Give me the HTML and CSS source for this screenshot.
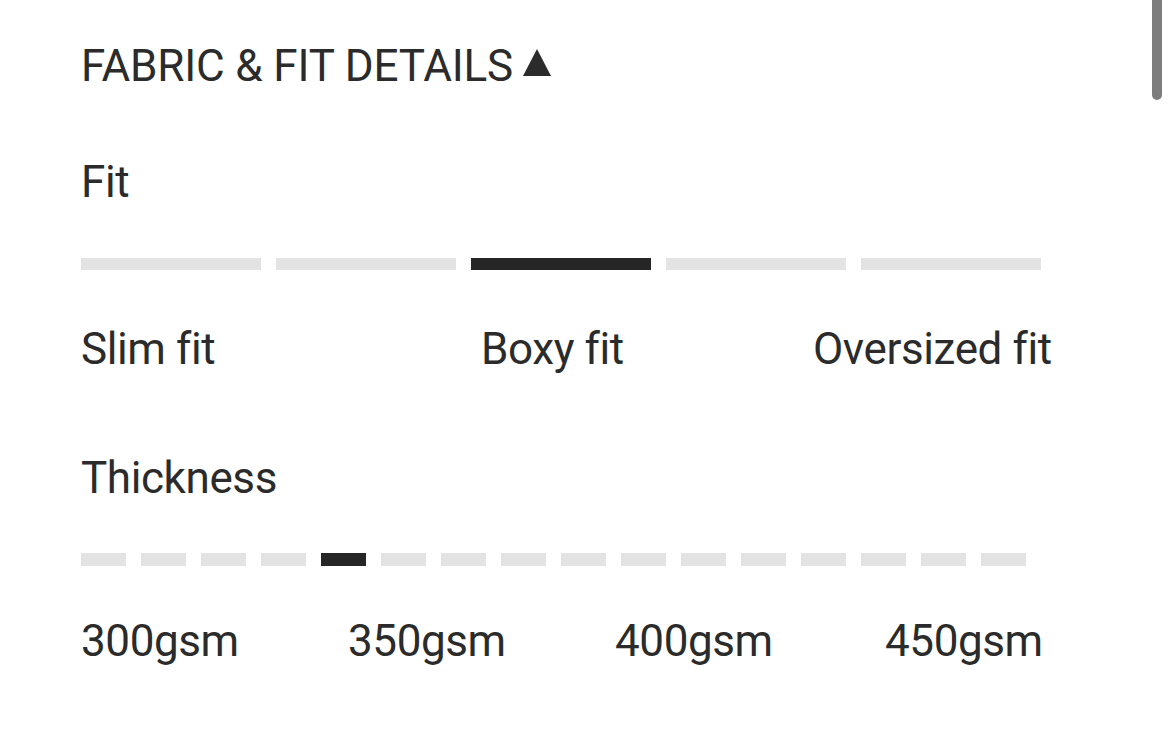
FILE: index.html
```html
<!DOCTYPE html>
<html lang="en">
<head>
    <meta charset="UTF-8">
    <meta name="viewport" content="width=device-width, initial-scale=1.0">
    <title>Fabric &amp; Fit Details</title>
    <link rel="stylesheet" href="styles.css">
</head>
<body>
    <div class="scroll-thumb"></div>

    <section class="details">
        <h2 class="details-title">
            <span>FABRIC &amp; FIT DETAILS</span>
            <svg class="caret" viewBox="0 0 28 27" width="28" height="27">
                <polygon points="14,0 28,27 0,27" />
            </svg>
        </h2>

        <h3 class="scale-title">Fit</h3>
        <div class="scale fit-scale">
            <span class="step"></span>
            <span class="step"></span>
            <span class="step active"></span>
            <span class="step"></span>
            <span class="step"></span>
        </div>
        <div class="scale-labels fit-labels">
            <span>Slim fit</span>
            <span>Boxy fit</span>
            <span>Oversized fit</span>
        </div>

        <h3 class="scale-title thickness-title">Thickness</h3>
        <div class="scale thickness-scale">
            <span class="step"></span>
            <span class="step"></span>
            <span class="step"></span>
            <span class="step"></span>
            <span class="step active"></span>
            <span class="step"></span>
            <span class="step"></span>
            <span class="step"></span>
            <span class="step"></span>
            <span class="step"></span>
            <span class="step"></span>
            <span class="step"></span>
            <span class="step"></span>
            <span class="step"></span>
            <span class="step"></span>
            <span class="step"></span>
        </div>
        <div class="scale-labels thickness-labels">
            <span>300gsm</span>
            <span>350gsm</span>
            <span>400gsm</span>
            <span>450gsm</span>
        </div>
    </section>
</body>
</html>
```

FILE: styles.css
```css
/* General Styles */
body {
    margin: 0;
    padding: 0;
    background: #ffffff;
    color: #2b2b2b;
    font-family: Roboto, "Liberation Sans", sans-serif;
}

.details {
    padding: 40px 0 0 81px;
}

h2, h3 {
    margin: 0;
    font-weight: 400;
}

.details-title,
.scale-title,
.scale-labels {
    font-size: 44px;
    line-height: 52px;
    letter-spacing: -0.4px;
}

.details-title {
    display: flex;
    align-items: center;
    gap: 10px;
    letter-spacing: -0.15px;
}

.caret {
    fill: #2b2b2b;
    margin-top: -8px;
}

.scale-title {
    margin-top: 64px;
}

.thickness-title {
    margin-top: 77px;
}

/* Step bars */
.scale {
    display: grid;
    gap: 15px;
    margin-top: 50px;
}

.fit-scale {
    grid-template-columns: repeat(5, 180px);
}

.thickness-scale {
    grid-template-columns: repeat(16, 45px);
    margin-top: 49px;
}

.step {
    height: 12px;
    background: #e3e3e3;
}

.thickness-scale .step {
    height: 13px;
}

.step.active {
    background: #262626;
}

.scale-labels {
    display: grid;
    margin-top: 53px;
}

.fit-labels {
    grid-template-columns: 400px 332px auto;
}

.thickness-labels {
    grid-template-columns: 267px 267px 270px auto;
    margin-top: 49px;
}

.scroll-thumb {
    position: fixed;
    top: 0;
    right: 8px;
    width: 10px;
    height: 100px;
    background: #7d7d7d;
    border-radius: 0 0 5px 5px;
}
```
